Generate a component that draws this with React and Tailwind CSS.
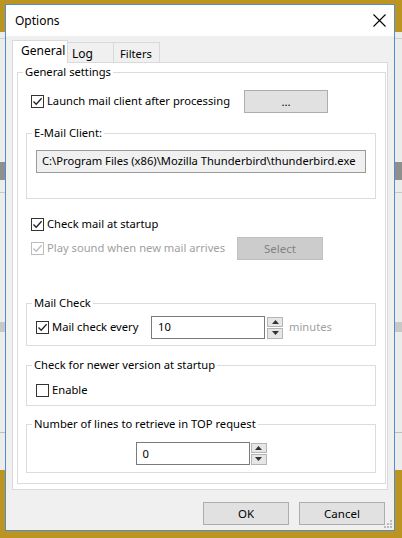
import React from 'react';

const Check = ({ checked, disabled }) => (
  <span
    className={`w-[13px] h-[13px] shrink-0 border bg-white flex items-center justify-center ${
      disabled ? 'border-[#bcbcbc]' : 'border-[#333333]'
    }`}
  >
    {checked && (
      <svg width="11" height="11" viewBox="0 0 11 11">
        <path
          d="M1.5 5.5 L4.2 8.3 L9.6 2.2"
          fill="none"
          stroke={disabled ? '#bcbcbc' : '#222222'}
          strokeWidth="1.3"
        />
      </svg>
    )}
  </span>
);

const Group = ({ label, className = '', children }) => (
  <fieldset className={`border border-[#dcdcdc] ${className}`}>
    <legend className="ml-[5px] px-[2px] leading-[16px] text-black whitespace-nowrap">{label}</legend>
    {children}
  </fieldset>
);

const Spinner = ({ className = '' }) => (
  <div className={`flex flex-col gap-[1px] w-[16px] h-[22px] ${className}`}>
    <div className="flex-1 border border-[#b5b5b5] bg-[#e6e6e6] flex items-center justify-center">
      <svg width="7" height="4" viewBox="0 0 7 4">
        <path d="M0 4 L3.5 0 L7 4 Z" fill="#333" />
      </svg>
    </div>
    <div className="flex-1 border border-[#b5b5b5] bg-[#e6e6e6] flex items-center justify-center">
      <svg width="7" height="4" viewBox="0 0 7 4">
        <path d="M0 0 L3.5 4 L7 0 Z" fill="#333" />
      </svg>
    </div>
  </div>
);

const Button = ({ children, className = '' }) => (
  <button className={`h-[23px] border border-[#adadad] bg-[#e1e1e1] text-[11.5px] text-black ${className}`}>
    {children}
  </button>
);

export default function App() {
  return (
    <div className="relative w-[402px] h-[538px] overflow-hidden bg-[#bb951f] font-['Noto_Sans',sans-serif] text-[11.2px] text-black whitespace-nowrap">
      {/* app window behind the dialog */}
      <div className="absolute left-0 top-[32px] w-full h-[438px] bg-[#ececec]">
        <div className="absolute left-0 top-[6px] w-full h-[1px] bg-[#d0d0d0]" />
        <div className="absolute left-0 top-[130px] w-full h-[18px] bg-[#8f8f8f]" />
        <div className="absolute left-0 top-[160px] w-full h-[1px] bg-[#c8c8c8]" />
        <div className="absolute left-0 top-[290px] w-full h-[10px] bg-[#c8c8c8]" />
        <div className="absolute left-0 top-[400px] w-full h-[1px] bg-[#bdbdbd]" />
      </div>

      {/* dialog */}
      <div className="absolute left-[5px] top-[4px] w-[390px] h-[527px] border border-[#4f8dcc] bg-[#f0f0f0] flex flex-col">
        <div className="h-[31px] bg-white flex items-center justify-between pl-[9px] pr-[8px] shrink-0">
          <span className="text-[12px]">Options</span>
          <svg width="13" height="13" viewBox="0 0 13 13">
            <path d="M0.5 0.5 L12.5 12.5 M12.5 0.5 L0.5 12.5" stroke="#000" strokeWidth="1.1" />
          </svg>
        </div>

        <div className="flex flex-col pt-[4px]">
          {/* tabs */}
          <div className="ml-[6px] flex items-end h-[22px]">
            <div className="relative z-10 w-[56px] h-[23px] mb-[-1px] bg-white border-l border-t border-r border-[#d9d9d9] pl-[8px] leading-[20px] text-[12px]">
              General
            </div>
            <div className="w-[46px] h-[20px] border-t border-r border-[#d9d9d9] pl-[4px] leading-[21px] text-[12px]">Log</div>
            <div className="w-[46px] h-[20px] border-t border-r border-[#d9d9d9] pl-[6px] leading-[21px]">Filters</div>
          </div>

          {/* tab panel */}
          <div className="ml-[6px] w-[376px] h-[428px] bg-white border border-[#d9d9d9] pt-[1px] pl-[4px]">
            <Group label="General settings" className="w-[369px]">
              <div className="mt-[10px] h-[23px] pl-[13px] flex items-center">
                <div className="w-[213px] flex items-center gap-[3px]">
                  <Check checked />
                  <span>Launch mail client after processing</span>
                </div>
                <Button className="w-[84px]">...</Button>
              </div>

              <Group label="E-Mail Client:" className="ml-[8px] mt-[12px] w-[350px]">
                <div className="mx-[9px] mt-[9px] mb-[25px] w-[330px] h-[23px] border border-[#9a9a9a] bg-[#f0f0f0] pl-[5px] flex items-center overflow-hidden">
                  C:\Program Files (x86)\Mozilla Thunderbird\thunderbird.exe
                </div>
              </Group>

              <div className="mt-[17px] h-[16px] pl-[13px] flex items-center gap-[3px]">
                <Check checked />
                <span>Check mail at startup</span>
              </div>

              <div className="mt-[5px] h-[23px] pl-[13px] flex items-center">
                <div className="w-[206px] flex items-center gap-[3px]">
                  <Check checked disabled />
                  <span className="text-[#a0a0a0]">Play sound when new mail arrives</span>
                </div>
                <button className="w-[86px] h-[23px] border border-[#bfbfbf] bg-[#cccccc] text-[11.5px] text-[#838383]">
                  Select
                </button>
              </div>

              <Group label="Mail Check" className="ml-[8px] mt-[35px] w-[350px]">
                <div className="mt-[5px] mb-[6px] h-[23px] pl-[9px] flex items-center">
                  <div className="w-[115px] flex items-center gap-[3px]">
                    <Check checked />
                    <span>Mail check every</span>
                  </div>
                  <div className="w-[114px] h-[23px] border border-[#7a7a7a] bg-white pl-[6px] leading-[19px]">10</div>
                  <Spinner className="ml-[2px]" />
                  <span className="ml-[6px] text-[#a0a0a0]">minutes</span>
                </div>
              </Group>

              <Group label="Check for newer version at startup" className="ml-[8px] mt-[11px] w-[350px]">
                <div className="mt-[9px] mb-[7px] h-[16px] pl-[9px] flex items-center gap-[3px]">
                  <Check />
                  <span>Enable</span>
                </div>
              </Group>

              <Group label="Number of lines to retrieve in TOP request" className="ml-[8px] mt-[10px] mb-[10px] w-[350px]">
                <div className="mt-[10px] mb-[7px] h-[23px] flex items-center justify-center">
                  <div className="w-[114px] h-[23px] border border-[#7a7a7a] bg-white pl-[6px] leading-[21px]">0</div>
                  <Spinner className="ml-[1px]" />
                </div>
              </Group>
            </Group>
          </div>

          {/* dialog buttons */}
          <div className="mt-[12px] pr-[9px] flex justify-end gap-[10px]">
            <Button className="w-[86px]">OK</Button>
            <Button className="w-[86px]">Cancel</Button>
          </div>
        </div>

        {/* size grip */}
        <div className="absolute right-[2px] bottom-[2px] grid grid-cols-3 gap-[1px] w-[8px] h-[8px]">
          <span />
          <span />
          <span className="w-[2px] h-[2px] bg-[#bcbcbc]" />
          <span />
          <span className="w-[2px] h-[2px] bg-[#bcbcbc]" />
          <span className="w-[2px] h-[2px] bg-[#bcbcbc]" />
          <span className="w-[2px] h-[2px] bg-[#bcbcbc]" />
          <span className="w-[2px] h-[2px] bg-[#bcbcbc]" />
          <span className="w-[2px] h-[2px] bg-[#bcbcbc]" />
        </div>
      </div>
    </div>
  );
}
